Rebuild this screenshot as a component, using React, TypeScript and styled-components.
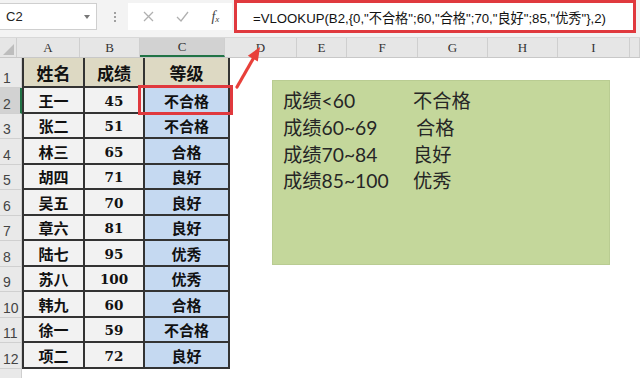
import React from 'react';
import styled, { createGlobalStyle } from 'styled-components';

const Global = createGlobalStyle`
  html, body { margin: 0; padding: 0; background: #fff; overflow: hidden; }
  body { font-family: "Liberation Sans", "Noto Sans CJK SC", sans-serif; }
`;

const Page = styled.div`
  position: relative;
  width: 640px;
  height: 378px;
  overflow: hidden;
  background: #fff;
`;

const TopBar = styled.div`
  height: 38px;
  box-sizing: border-box;
  background: #f3f3f3;
  border-bottom: 1px solid #d8d8d8;
  display: flex;
  align-items: flex-start;
`;

const NameBox = styled.div`
  margin-top: 3px;
  width: 97px;
  height: 27px;
  box-sizing: border-box;
  background: #fff;
  border: 1px solid #cfcfcf;
  border-left: none;
  display: flex;
  align-items: center;
  justify-content: space-between;
  padding: 0 6px 0 6px;
  font-size: 13px;
  color: #222;
`;

const Caret = styled.span`
  width: 0;
  height: 0;
  border-left: 3.5px solid transparent;
  border-right: 3.5px solid transparent;
  border-top: 4px solid #777;
`;

const Dots = styled.div`
  width: 31px;
  height: 33px;
  display: flex;
  flex-direction: column;
  align-items: center;
  justify-content: center;
  gap: 2px;
  padding-left: 4px;
  box-sizing: border-box;
`;

const Dot = styled.span`
  width: 2px;
  height: 2px;
  background: #a0a0a0;
`;

const ButtonBox = styled.div`
  margin-top: 3px;
  width: 104px;
  height: 27px;
  box-sizing: border-box;
  background: #fff;
  display: flex;
  align-items: center;
  padding-left: 3px;
`;

const IconSlot = styled.div<{ $w: number }>`
  width: ${(p) => p.$w}px;
  display: flex;
  align-items: center;
  justify-content: center;
  color: #555;
`;

const Fx = styled.span`
  font-family: "Liberation Serif", serif;
  font-style: italic;
  font-size: 14px;
  color: #444;
  sub {
    font-size: 9px;
    vertical-align: -1px;
  }
`;

const FormulaBox = styled.div`
  margin-left: 2px;
  width: 402px;
  height: 33px;
  box-sizing: border-box;
  border: 3px solid #e0393e;
  background: #fff;
  padding: 5px 0 0 16px;
  font-family: "Liberation Sans", "Noto Sans CJK SC", sans-serif;
  font-size: 13.2px;
  color: #111;
  white-space: nowrap;
`;

const HeaderRow = styled.div`
  display: flex;
  height: 19px;
  background: #e6e6e6;
  border-bottom: 1px solid #c8c8c8;
  box-sizing: content-box;
`;

const Corner = styled.div`
  width: 22px;
  position: relative;
  border-right: 1px solid #cfcfcf;
  box-sizing: border-box;
  display: flex;
  align-items: flex-end;
  justify-content: flex-end;
  padding: 0 2px 2px 0;
`;

const CornerTri = styled.span`
  width: 0;
  height: 0;
  border-left: 11px solid transparent;
  border-bottom: 11px solid #bdbdbd;
`;

const ColHead = styled.div<{ $w: number; $sel?: boolean }>`
  width: ${(p) => p.$w}px;
  flex: none;
  box-sizing: border-box;
  border-right: 1px solid #cfcfcf;
  background: ${(p) => (p.$sel ? '#d2d2d2' : 'transparent')};
  border-bottom: ${(p) => (p.$sel ? '2px solid #217346' : 'none')};
  display: flex;
  align-items: center;
  justify-content: center;
  font-family: "Liberation Serif", serif;
  font-size: 13px;
  color: #333;
`;

const Row = styled.div<{ $h: number }>`
  display: flex;
  height: ${(p) => p.$h}px;
`;

const RowNum = styled.div<{ $sel?: boolean }>`
  width: 22px;
  flex: none;
  box-sizing: border-box;
  background: ${(p) => (p.$sel ? '#d2d2d2' : '#e9e9e9')};
  border-bottom: 1px solid #d0d0d0;
  border-right: ${(p) => (p.$sel ? '2px solid #217346' : '1px solid #cfcfcf')};
  display: flex;
  align-items: flex-end;
  padding: 0 0 2px 3px;
  font-family: "Liberation Sans", sans-serif;
  font-size: 14px;
  color: #444;
  line-height: 1;
`;

type Kind = 'head' | 'name' | 'score' | 'grade';

const bgFor: Record<Kind, string> = {
  head: '#ddd9c3',
  name: '#f2f2f2',
  score: '#f2f2f2',
  grade: '#c5d9f1',
};

const Cell = styled.div<{ $w: number; $kind: Kind; $first?: boolean }>`
  width: ${(p) => p.$w}px;
  flex: none;
  box-sizing: border-box;
  background: ${(p) => bgFor[p.$kind]};
  border-right: 2px solid #333;
  border-bottom: 2px solid #333;
  border-left: ${(p) => (p.$first ? '2px solid #333' : 'none')};
  display: flex;
  align-items: center;
  justify-content: center;
  color: #111;
  font-weight: 700;
  font-family: ${(p) =>
    p.$kind === 'score'
      ? '"DejaVu Serif", serif'
      : '"Noto Sans CJK SC", sans-serif'};
  font-size: ${(p) => (p.$kind === 'head' ? '17px' : p.$kind === 'score' ? '13.5px' : '15px')};
  padding-top: ${(p) => (p.$kind === 'score' ? '1px' : '0')};
`;

const GreenNote = styled.div`
  position: absolute;
  left: 272px;
  top: 80px;
  width: 338px;
  height: 185px;
  box-sizing: border-box;
  background: #c4d79b;
  border: 1px solid #b9cc92;
  padding: 6px 0 0 10px;
  display: grid;
  grid-template-columns: 130px 1fr;
  grid-auto-rows: 26.7px;
  align-items: center;
  align-content: start;
  font-family: "Lato", "Noto Sans CJK SC", sans-serif;
  font-size: 19.3px;
  color: #262626;
`;

const NoteText = styled.span<{ $indent?: number }>`
  padding-left: ${(p) => p.$indent ?? 0}px;
  white-space: nowrap;
`;

const RedFrame = styled.div`
  position: absolute;
  left: 138px;
  top: 85px;
  width: 95px;
  height: 30px;
  box-sizing: border-box;
  border: 3px solid #e0393e;
`;

const ArrowSvg = styled.svg`
  position: absolute;
  left: 230px;
  top: 44px;
`;

const colWidths = [63, 60, 85, 72, 50, 71, 70, 70, 72, 10];
const colLabels = ['A', 'B', 'C', 'D', 'E', 'F', 'G', 'H', 'I', ''];

const data: [string, string, string][] = [
  ['王一', '45', '不合格'],
  ['张二', '51', '不合格'],
  ['林三', '65', '合格'],
  ['胡四', '71', '良好'],
  ['吴五', '70', '良好'],
  ['章六', '81', '良好'],
  ['陆七', '95', '优秀'],
  ['苏八', '100', '优秀'],
  ['韩九', '60', '合格'],
  ['徐一', '59', '不合格'],
  ['项二', '72', '良好'],
];

const notes: [string, string, number][] = [
  ['成绩<60', '不合格', 0],
  ['成绩60~69', '合格', 3],
  ['成绩70~84', '良好', 0],
  ['成绩85~100', '优秀', 0],
];

export default function App() {
  return (
    <Page>
      <Global />
      <TopBar>
        <NameBox>
          <span>C2</span>
          <Caret />
        </NameBox>
        <Dots>
          <Dot />
          <Dot />
          <Dot />
        </Dots>
        <ButtonBox>
          <IconSlot $w={35}>
            <svg width="11" height="11" viewBox="0 0 11 11">
              <path d="M1 1 L10 10 M10 1 L1 10" stroke="#b0b0b0" strokeWidth="1.3" fill="none" />
            </svg>
          </IconSlot>
          <IconSlot $w={34}>
            <svg width="13" height="11" viewBox="0 0 13 11">
              <path d="M1 6 L5 10 L12 1" stroke="#b0b0b0" strokeWidth="1.3" fill="none" />
            </svg>
          </IconSlot>
          <IconSlot $w={34}>
            <Fx>
              f<sub>x</sub>
            </Fx>
          </IconSlot>
        </ButtonBox>
        <FormulaBox>=VLOOKUP(B2,{'{'}0,"不合格";60,"合格";70,"良好";85,"优秀"{'}'},2)</FormulaBox>
      </TopBar>

      <HeaderRow>
        <Corner>
          <CornerTri />
        </Corner>
        {colWidths.map((w, i) => (
          <ColHead key={i} $w={w} $sel={i === 2}>
            {colLabels[i]}
          </ColHead>
        ))}
      </HeaderRow>

      <Row $h={30}>
        <RowNum>1</RowNum>
        <Cell $w={63} $kind="head" $first>姓名</Cell>
        <Cell $w={60} $kind="head">成绩</Cell>
        <Cell $w={85} $kind="head">等级</Cell>
      </Row>
      {data.map((r, i) => (
        <Row key={i} $h={i % 2 === 0 ? 26 : 25}>
          <RowNum $sel={i === 0}>{i + 2}</RowNum>
          <Cell $w={63} $kind="name" $first>{r[0]}</Cell>
          <Cell $w={60} $kind="score">{r[1]}</Cell>
          <Cell $w={85} $kind="grade">{r[2]}</Cell>
        </Row>
      ))}
      <Row $h={20}>
        <RowNum />
      </Row>

      <GreenNote>
        {notes.map((n, i) => (
          <React.Fragment key={i}>
            <NoteText>{n[0]}</NoteText>
            <NoteText $indent={n[2]}>{n[1]}</NoteText>
          </React.Fragment>
        ))}
      </GreenNote>

      <RedFrame />
      <ArrowSvg width="36" height="48" viewBox="0 0 36 48">
        <path d="M7 43 L23 15" stroke="#e8403a" strokeWidth="3.2" strokeLinecap="round" fill="none" />
        <polygon points="30,3 27.8,17.5 17.8,11.8" fill="#e8403a" />
      </ArrowSvg>
    </Page>
  );
}
